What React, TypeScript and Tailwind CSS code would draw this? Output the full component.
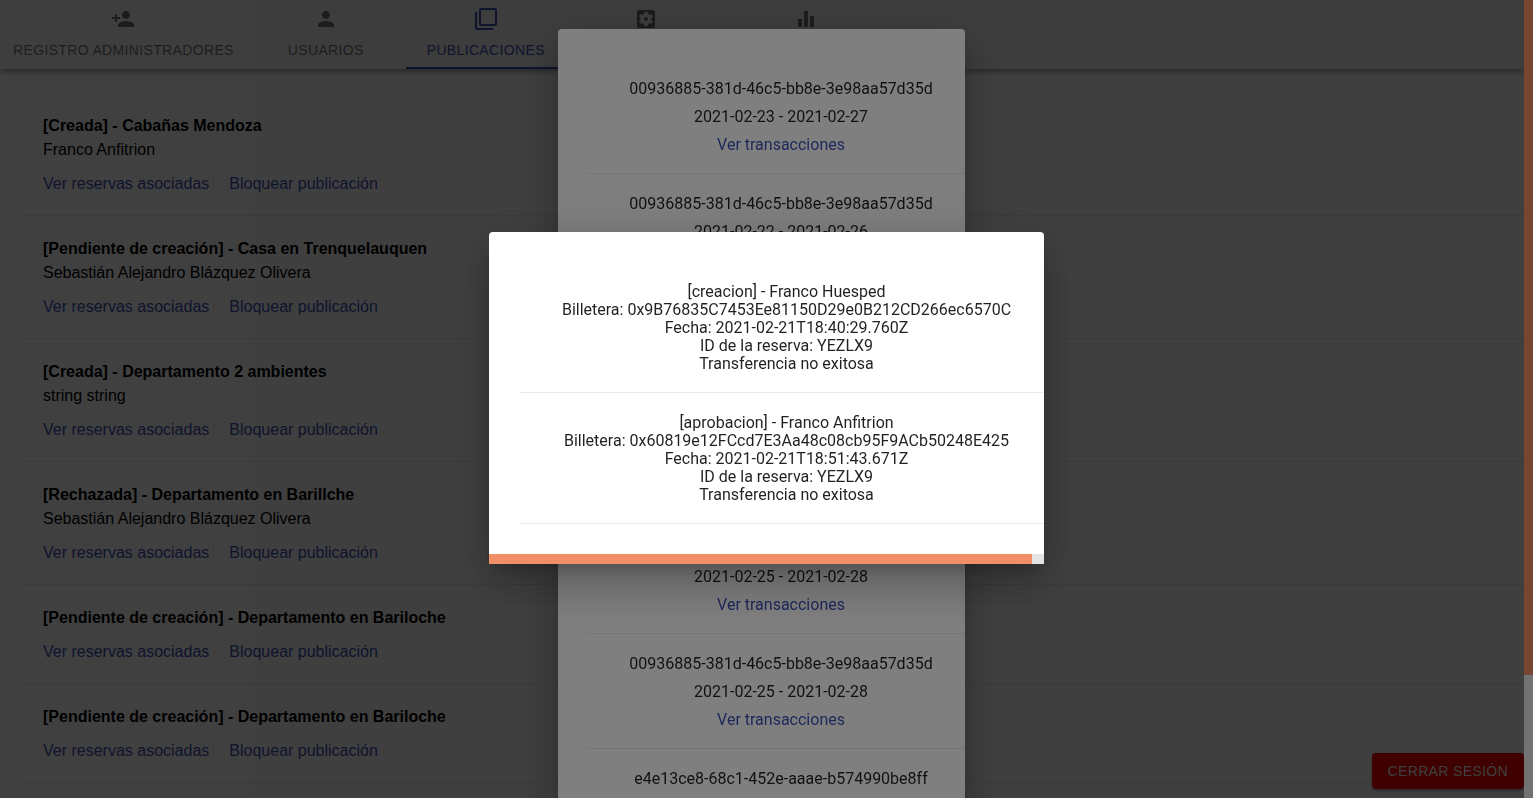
import React from "react";
import {
  MdEqualizer,
  MdFilterNone,
  MdPerson,
  MdPersonAdd,
  MdSettingsApplications,
} from "react-icons/md";

const tabs = [
  { label: "Registro administradores", icon: MdPersonAdd },
  { label: "Usuarios", icon: MdPerson },
  { label: "Publicaciones", icon: MdFilterNone, active: true },
  { label: "Configuración", icon: MdSettingsApplications },
  { label: "Métricas", icon: MdEqualizer },
];

const posts = [
  { title: "[Creada] - Cabañas Mendoza", owner: "Franco Anfitrion" },
  { title: "[Pendiente de creación] - Casa en Trenquelauquen", owner: "Sebastián Alejandro Blázquez Olivera" },
  { title: "[Creada] - Departamento 2 ambientes", owner: "string string" },
  { title: "[Rechazada] - Departamento en Barillche", owner: "Sebastián Alejandro Blázquez Olivera" },
  { title: "[Pendiente de creación] - Departamento en Bariloche" },
  { title: "[Pendiente de creación] - Departamento en Bariloche" },
];

const bookings = [
  { id: "00936885-381d-46c5-bb8e-3e98aa57d35d", dates: "2021-02-23 - 2021-02-27" },
  { id: "00936885-381d-46c5-bb8e-3e98aa57d35d", dates: "2021-02-22 - 2021-02-26" },
  { id: "00936885-381d-46c5-bb8e-3e98aa57d35d", dates: "2021-02-24 - 2021-02-27" },
  { id: "00936885-381d-46c5-bb8e-3e98aa57d35d", dates: "2021-02-24 - 2021-02-28" },
  { id: "00936885-381d-46c5-bb8e-3e98aa57d35d", dates: "2021-02-25 - 2021-02-28" },
  { id: "00936885-381d-46c5-bb8e-3e98aa57d35d", dates: "2021-02-25 - 2021-02-28" },
  { id: "e4e13ce8-68c1-452e-aaae-b574990be8ff", dates: "2021-02-25 - 2021-02-28" },
];

const transactions = [
  {
    title: "[creacion] - Franco Huesped",
    wallet: "0x9B76835C7453Ee81150D29e0B212CD266ec6570C",
    date: "2021-02-21T18:40:29.760Z",
  },
  {
    title: "[aprobacion] - Franco Anfitrion",
    wallet: "0x60819e12FCcd7E3Aa48c08cb95F9ACb50248E425",
    date: "2021-02-21T18:51:43.671Z",
  },
];

const dialogShadow =
  "shadow-[0_11px_15px_-7px_rgba(0,0,0,0.2),0_24px_38px_3px_rgba(0,0,0,0.14),0_9px_46px_8px_rgba(0,0,0,0.12)]";

function TabBar() {
  return (
    <header className="flex bg-[#f5f5f5] shadow-[0_2px_4px_-1px_rgba(0,0,0,0.2),0_4px_5px_0_rgba(0,0,0,0.14),0_1px_10px_0_rgba(0,0,0,0.12)]">
      <nav role="tablist" className="flex pl-px">
        {tabs.map(({ label, icon: Icon, active }) => (
          <button
            key={label}
            role="tab"
            aria-selected={!!active}
            className={`flex h-[69px] min-w-40 flex-col items-center gap-[7px] border-b-2 px-3 pt-[7px] text-sm leading-6 tracking-wide uppercase ${
              active ? "border-[#3f51b5] text-[#3f51b5]" : "border-transparent text-black/54"
            }`}
          >
            <Icon className="size-6 shrink-0" />
            {label}
          </button>
        ))}
      </nav>
    </header>
  );
}

function PostList() {
  return (
    <ul className="mt-6 ml-[22px]">
      {posts.map((post, i) => (
        <li key={i} className="border-b border-black/8 pt-[21px] pb-[19px] pl-[21px] leading-6">
          <h2 className="font-bold">{post.title}</h2>
          {post.owner && <p>{post.owner}</p>}
          <div className="mt-2.5 flex gap-[15px] text-[#3f51b5]">
            <button className="border-r border-black/8 pr-1">Ver reservas asociadas</button>
            <button>Bloquear publicación</button>
          </div>
        </li>
      ))}
    </ul>
  );
}

function BookingsDialog() {
  return (
    <div className="fixed inset-0 flex overflow-hidden bg-black/50">
      <div className="flex-1 pt-[29px] pr-0.5">
        <section
          role="dialog"
          aria-label="Reservas asociadas"
          className={`mx-auto w-[407px] rounded bg-white py-[30px] pl-[30px] font-[Roboto,sans-serif] text-black/87 ${dialogShadow}`}
        >
          <ul>
            {bookings.map((b, i) => (
              <li
                key={i}
                className="flex flex-col items-center border-b border-black/8 pt-4 pb-3.5 pl-2.5 leading-7"
              >
                <span>{b.id}</span>
                <span>{b.dates}</span>
                <button className="text-[#3f51b5]">Ver transacciones</button>
              </li>
            ))}
          </ul>
        </section>
      </div>
      <div className="w-[9px] bg-[#e4e4e4]">
        <div className="h-[675px] bg-[#f08e67]" />
      </div>
    </div>
  );
}

function TransactionsDialog() {
  return (
    <div className="fixed inset-0 flex items-center justify-center bg-black/50 pb-0.5">
      <section
        role="dialog"
        aria-label="Transacciones"
        className={`w-[555px] overflow-hidden rounded-t bg-white font-[Roboto,sans-serif] text-black/87 ${dialogShadow}`}
      >
        <ul className="py-[30px] pl-[30px]">
          {transactions.map((t) => (
            <li
              key={t.title}
              className="border-b border-black/8 pt-[21px] pb-[19px] pl-2.5 text-center leading-[18px]"
            >
              <p>{t.title}</p>
              <p>Billetera: {t.wallet}</p>
              <p>Fecha: {t.date}</p>
              <p>ID de la reserva: YEZLX9</p>
              <p>Transferencia no exitosa</p>
            </li>
          ))}
        </ul>
        <div className="h-2.5 bg-[#e4e4e4] pr-3">
          <div className="h-full bg-[#f08e67]" />
        </div>
      </section>
    </div>
  );
}

export default function App() {
  return (
    <div className="h-screen overflow-hidden bg-white pr-[9px] font-['Liberation_Sans',Arial,sans-serif] text-base text-black">
      <TabBar />
      <main>
        <PostList />
      </main>
      <button className="fixed right-[9px] bottom-[9px] rounded bg-[red] px-4 py-1.5 text-sm leading-6 tracking-wide text-white uppercase shadow-[0_3px_1px_-2px_rgba(0,0,0,0.2),0_2px_2px_0_rgba(0,0,0,0.14),0_1px_5px_0_rgba(0,0,0,0.12)]">
        Cerrar sesión
      </button>
      <BookingsDialog />
      <TransactionsDialog />
    </div>
  );
}
